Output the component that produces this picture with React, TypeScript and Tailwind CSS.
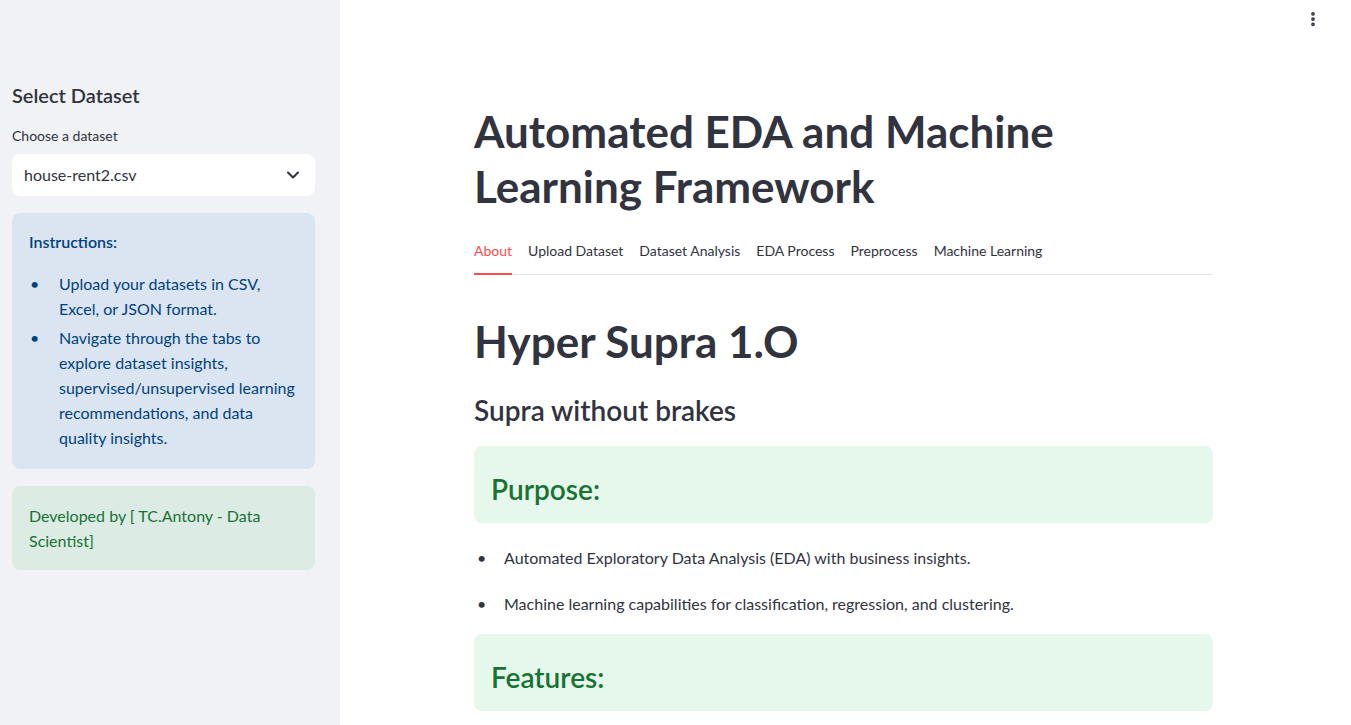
import { ChevronDown, EllipsisVertical } from 'lucide-react';

const tabs = ['About', 'Upload Dataset', 'Dataset Analysis', 'EDA Process', 'Preprocess', 'Machine Learning'];

function Sidebar() {
  return (
    <aside className="w-[340px] shrink-0 bg-[#f0f2f6] pl-3 pr-[25px] pt-[83px]">
      <h3 className="text-[20px] font-semibold leading-[24px] text-[#31333f]">Select Dataset</h3>

      <div className="mt-[20px] text-[14px] leading-[18px] text-[#31333f]">Choose a dataset</div>
      <div className="mt-[9px] flex h-[42px] items-center justify-between rounded-lg bg-white pl-3 pr-3 text-[16px] text-[#31333f]">
        <span>house-rent2.csv</span>
        <ChevronDown className="h-5 w-5" strokeWidth={2.5} />
      </div>

      {/* Instructions */}
      <div className="mt-[17px] rounded-lg bg-[#dbe5f2] px-[17px] pb-[19px] pt-[16px] text-[16px] leading-[25px] text-[#004280]">
        <p className="font-semibold">Instructions:</p>
        <ul className="mt-[17px] flex flex-col gap-1">
          <li className="flex">
            <span className="w-[30px] shrink-0 pl-[1px]">•</span>
            <span>Upload your datasets in CSV, Excel, or JSON format.</span>
          </li>
          <li className="flex">
            <span className="w-[30px] shrink-0 pl-[1px]">•</span>
            <span>Navigate through the tabs to explore dataset insights, supervised/unsupervised learning recommendations, and data quality insights.</span>
          </li>
        </ul>
      </div>

      <div className="mt-[17px] rounded-lg bg-[#dcece5] px-[17px] py-[17px] text-[16px] leading-[25px] text-[#177233]">
        Developed by [ TC.Antony - Data Scientist]
      </div>
    </aside>
  );
}

export default function App() {
  return (
    <div className="flex min-h-[725px] font-['Lato',sans-serif] text-[#31333f]">
      <Sidebar />
      <main className="relative flex-1 bg-white">
        <button className="absolute right-[29px] top-[10px] text-[#31333f]">
          <EllipsisVertical className="h-[18px] w-[18px]" strokeWidth={3} />
        </button>

        <div className="ml-[134px] w-[739px] pt-[104px]">
          <h1 className="text-[44px] font-bold leading-[55px]">Automated EDA and Machine Learning Framework</h1>

          {/* tabs */}
          <div className="mt-[18px] flex gap-[16px] border-b border-[#e6e6ea] text-[14px]">
            {tabs.map((t, i) => (
              <div
                key={t}
                className={
                  i === 0
                    ? '-mb-[1px] border-b-2 border-[#ff4b4b] pb-[12px] pt-[8px] text-[#ff4b4b]'
                    : 'pb-[13px] pt-[8px]'
                }
              >
                {t}
              </div>
            ))}
          </div>

          <h1 className="mt-[39px] text-[44px] font-bold leading-[55px]">Hyper Supra 1.O</h1>
          <h3 className="mt-[23px] text-[28px] font-semibold leading-[36px]">Supra without brakes</h3>

          <div className="mt-[18px] flex h-[77px] items-center rounded-lg bg-[#e6f7ec] px-[17px] pt-[9px]">
            <h3 className="text-[28px] font-semibold text-[#177233]">Purpose:</h3>
          </div>

          <ul className="mt-[22px] text-[16px] leading-[26px]">
            <li className="flex">
              <span className="w-[30px] shrink-0 pl-[3px]">•</span>
              <span>Automated Exploratory Data Analysis (EDA) with business insights.</span>
            </li>
            <li className="mt-[20px] flex">
              <span className="w-[30px] shrink-0 pl-[3px]">•</span>
              <span>Machine learning capabilities for classification, regression, and clustering.</span>
            </li>
          </ul>

          <div className="mt-[17px] flex h-[77px] items-center rounded-lg bg-[#e6f7ec] px-[17px] pt-[9px]">
            <h3 className="text-[28px] font-semibold text-[#177233]">Features:</h3>
          </div>
        </div>
      </main>
    </div>
  );
}
